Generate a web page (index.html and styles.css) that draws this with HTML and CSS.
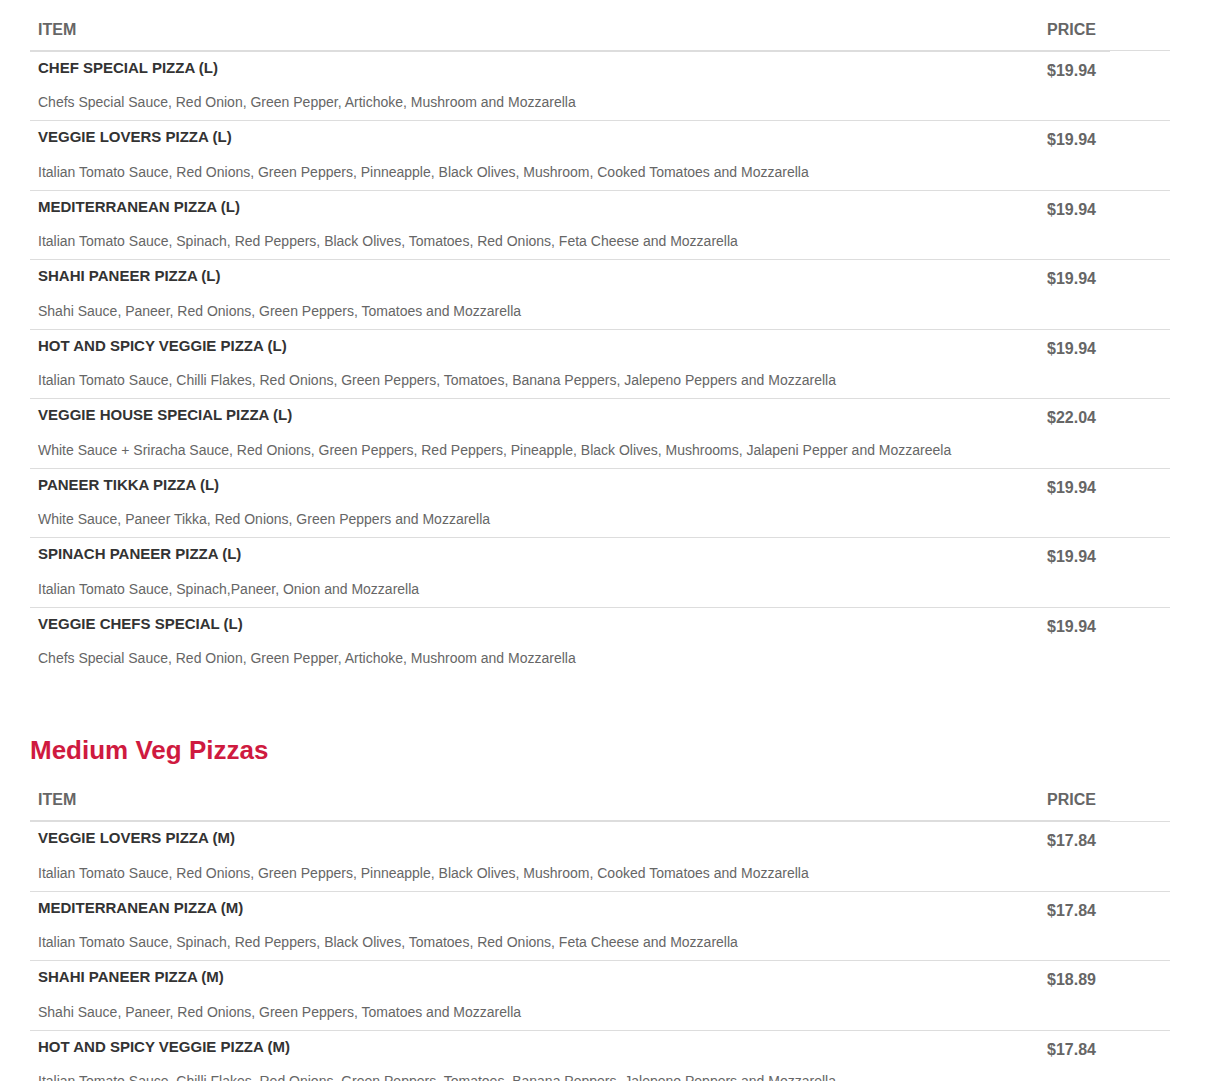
FILE: index.html
```html
<!DOCTYPE html>
<html lang="en">
<head>
<meta charset="utf-8">
<title>Menu</title>
<link rel="stylesheet" href="styles.css">
</head>
<body>
<div class="page">
  <table class="menu">
    <colgroup><col class="c-item"><col class="c-price"><col class="c-extra"></colgroup>
    <thead><tr><th>Item</th><th>Price</th></tr></thead>
    <tbody>
      <tr><td><span class="name">CHEF SPECIAL PIZZA (L)</span><span class="desc">Chefs Special Sauce, Red Onion, Green Pepper, Artichoke, Mushroom and Mozzarella</span></td><td class="price">$19.94</td><td></td></tr>
      <tr><td><span class="name">VEGGIE LOVERS PIZZA (L)</span><span class="desc">Italian Tomato Sauce, Red Onions, Green Peppers, Pinneapple, Black Olives, Mushroom, Cooked Tomatoes and Mozzarella</span></td><td class="price">$19.94</td><td></td></tr>
      <tr><td><span class="name">MEDITERRANEAN PIZZA (L)</span><span class="desc">Italian Tomato Sauce, Spinach, Red Peppers, Black Olives, Tomatoes, Red Onions, Feta Cheese and Mozzarella</span></td><td class="price">$19.94</td><td></td></tr>
      <tr><td><span class="name">SHAHI PANEER PIZZA (L)</span><span class="desc">Shahi Sauce, Paneer, Red Onions, Green Peppers, Tomatoes and Mozzarella</span></td><td class="price">$19.94</td><td></td></tr>
      <tr><td><span class="name">HOT AND SPICY VEGGIE PIZZA (L)</span><span class="desc">Italian Tomato Sauce, Chilli Flakes, Red Onions, Green Peppers, Tomatoes, Banana Peppers, Jalepeno Peppers and Mozzarella</span></td><td class="price">$19.94</td><td></td></tr>
      <tr><td><span class="name">VEGGIE HOUSE SPECIAL PIZZA (L)</span><span class="desc">White Sauce + Sriracha Sauce, Red Onions, Green Peppers, Red Peppers, Pineapple, Black Olives, Mushrooms, Jalapeni Pepper and Mozzareela</span></td><td class="price">$22.04</td><td></td></tr>
      <tr><td><span class="name">PANEER TIKKA PIZZA (L)</span><span class="desc">White Sauce, Paneer Tikka, Red Onions, Green Peppers and Mozzarella</span></td><td class="price">$19.94</td><td></td></tr>
      <tr><td><span class="name">SPINACH PANEER PIZZA (L)</span><span class="desc">Italian Tomato Sauce, Spinach,Paneer, Onion and Mozzarella</span></td><td class="price">$19.94</td><td></td></tr>
      <tr><td><span class="name">VEGGIE CHEFS SPECIAL (L)</span><span class="desc">Chefs Special Sauce, Red Onion, Green Pepper, Artichoke, Mushroom and Mozzarella</span></td><td class="price">$19.94</td><td></td></tr>
    </tbody>
  </table>

  <h2 class="section-title">Medium Veg Pizzas</h2>

  <table class="menu">
    <colgroup><col class="c-item"><col class="c-price"><col class="c-extra"></colgroup>
    <thead><tr><th>Item</th><th>Price</th></tr></thead>
    <tbody>
      <tr><td><span class="name">VEGGIE LOVERS PIZZA (M)</span><span class="desc">Italian Tomato Sauce, Red Onions, Green Peppers, Pinneapple, Black Olives, Mushroom, Cooked Tomatoes and Mozzarella</span></td><td class="price">$17.84</td><td></td></tr>
      <tr><td><span class="name">MEDITERRANEAN PIZZA (M)</span><span class="desc">Italian Tomato Sauce, Spinach, Red Peppers, Black Olives, Tomatoes, Red Onions, Feta Cheese and Mozzarella</span></td><td class="price">$17.84</td><td></td></tr>
      <tr><td><span class="name">SHAHI PANEER PIZZA (M)</span><span class="desc">Shahi Sauce, Paneer, Red Onions, Green Peppers, Tomatoes and Mozzarella</span></td><td class="price">$18.89</td><td></td></tr>
      <tr><td><span class="name">HOT AND SPICY VEGGIE PIZZA (M)</span><span class="desc">Italian Tomato Sauce, Chilli Flakes, Red Onions, Green Peppers, Tomatoes, Banana Peppers, Jalepeno Peppers and Mozzarella</span></td><td class="price">$17.84</td><td></td></tr>
    </tbody>
  </table>
</div>
</body>
</html>
```

FILE: styles.css
```css
html, body {
  margin: 0;
  padding: 0;
  background: #fff;
}

body {
  font-family: "Liberation Sans", Arial, Helvetica, sans-serif;
  color: #333;
}

.page {
  width: 1140px;
  padding: 11px 0 0 30px;
}

.menu {
  width: 1140px;
  border-collapse: collapse;
  border-spacing: 0;
  table-layout: fixed;
}

.c-item { width: 1009px; }
.c-price { width: 71px; }
.c-extra { width: 60px; }

.menu th {
  text-align: left;
  padding: 8px;
  font-size: 16px;
  line-height: 22.86px;
  font-weight: bold;
  color: #666;
  text-transform: uppercase;
  border-bottom: 2px solid #ddd;
  vertical-align: bottom;
}

.menu td {
  padding: 8px;
  border-top: 1px solid #ddd;
  vertical-align: top;
}

.name {
  display: block;
  font-size: 15px;
  line-height: 16.5px;
  font-weight: bold;
  color: #333;
}

.desc {
  display: block;
  margin-top: 16px;
  font-size: 14px;
  line-height: 20px;
  color: #666;
}

.price {
  font-size: 16px;
  line-height: 22.86px;
  font-weight: bold;
  color: #666;
}

.section-title {
  margin: 59.5px 0 17px;
  font-size: 26px;
  line-height: 28.6px;
  font-weight: bold;
  color: #cf1a3f;
}
```
